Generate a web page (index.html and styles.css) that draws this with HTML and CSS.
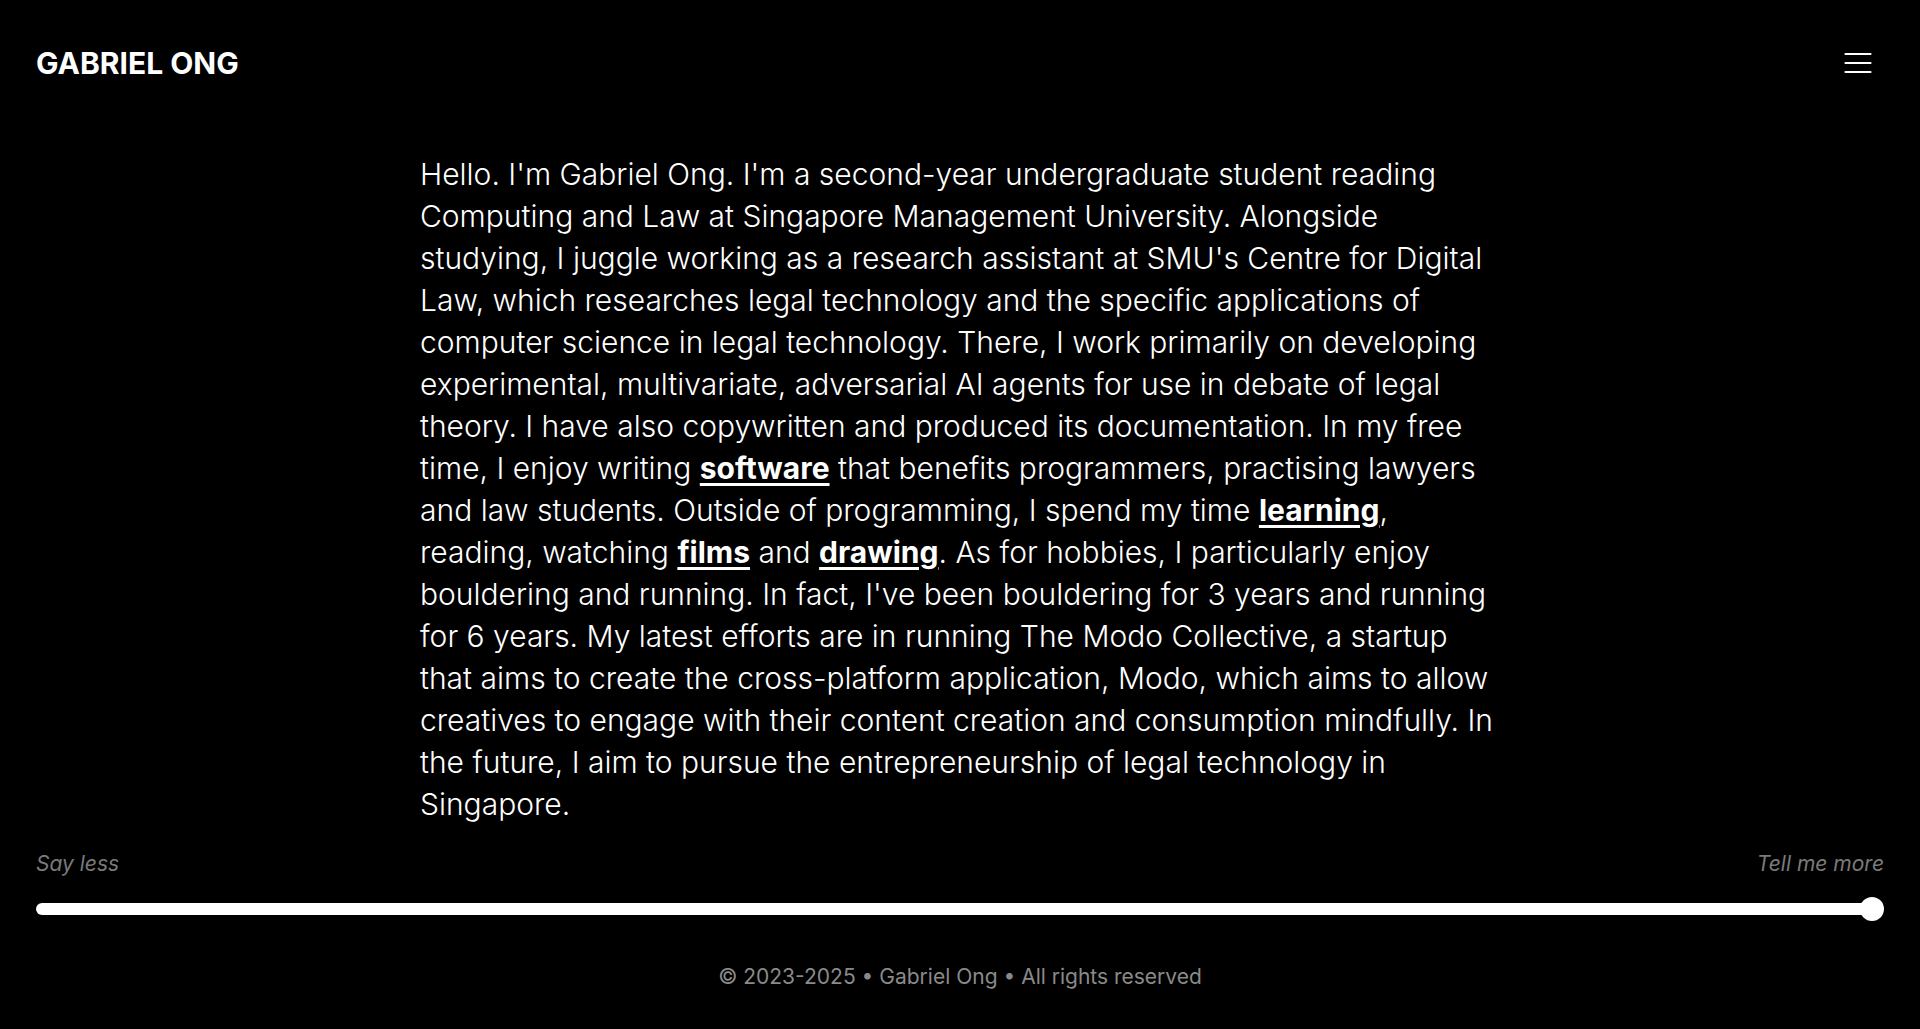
FILE: index.html
```html
<!DOCTYPE html>
<html lang="en">
<head>
<meta charset="utf-8">
<title>Gabriel Ong</title>
<link rel="stylesheet" href="styles.css">
</head>
<body>
<header class="site-header">
  <a class="brand" href="#">GABRIEL ONG</a>
  <button class="menu-btn" aria-label="Menu">
    <svg width="28" height="22" viewBox="0 0 28 22"><g stroke="#fff" stroke-width="2.2" stroke-linecap="round"><line x1="1.5" y1="2" x2="26.5" y2="2"/><line x1="1.5" y1="11" x2="26.5" y2="11"/><line x1="1.5" y1="20" x2="26.5" y2="20"/></g></svg>
  </button>
</header>
<main class="content">
  <p class="bio">Hello. I'm Gabriel Ong. I'm a second-year undergraduate student reading Computing and Law at Singapore Management University. Alongside studying, I juggle working as a research assistant at SMU's Centre for Digital Law, which researches legal technology and the specific applications of computer science in legal technology. There, I work primarily on developing experimental, multivariate, adversarial AI agents for use in debate of legal theory. I have also copywritten and produced its documentation. In my free time, I enjoy writing <a href="#">software</a> that benefits programmers, practising lawyers and law students. Outside of programming, I spend my time <a href="#">learning</a>, reading, watching <a href="#">films</a> and <a href="#">drawing</a>. As for hobbies, I particularly enjoy bouldering and running. In fact, I've been bouldering for 3 years and running for 6 years. My latest efforts are in running The Modo Collective, a startup that aims to create the cross-platform application, Modo, which aims to allow creatives to engage with their content creation and consumption mindfully. In the future, I aim to pursue the entrepreneurship of legal technology in Singapore.</p>
</main>
<section class="slider-area">
  <div class="slider-labels"><span>Say less</span><span>Tell me more</span></div>
  <div class="slider">
    <div class="track"></div>
    <div class="thumb"></div>
  </div>
</section>
<footer class="site-footer">© 2023-2025 • Gabriel Ong • All rights reserved</footer>
</body>
</html>
```
FILE: styles.css
```css
* { box-sizing: border-box; }
html, body { margin: 0; padding: 0; background: #000; color: #fff; }
body { font-family: Inter, "Noto Sans", sans-serif; min-height: 1029px; }
.site-header {
  display: flex;
  justify-content: space-between;
  align-items: center;
  padding: 44px 36px 0 36px;
  height: 82px;
}
.brand {
  font-family: Inter, sans-serif;
  font-weight: 700;
  font-size: 30px;
  color: #fff;
  text-decoration: none;
  line-height: 36px;
}
.menu-btn {
  background: none;
  border: 0;
  padding: 0;
  margin-right: 12px;
  display: flex;
}
.content {
  max-width: 1080px;
  margin: 71px auto 0;
}
.bio {
  margin: 0;
  font-size: 30px;
  line-height: 42px;
  font-weight: 300;
}
.bio a { color: #fff; font-weight: 700; text-decoration: underline; text-underline-offset: 4px; text-decoration-thickness: 3px; }
.slider-area { padding: 27px 36px 0; }
.slider-labels {
  display: flex;
  justify-content: space-between;
  font-style: italic;
  font-size: 21px;
  color: #7a7a7a;
  line-height: 24px;
}
.slider {
  display: flex;
  align-items: center;
  margin-top: 21px;
  height: 24px;
}
.track { flex: 1; height: 12px; background: #fff; border-radius: 6px; }
.thumb { width: 24px; height: 24px; border-radius: 50%; background: #fff; margin-left: -12px; }
.site-footer {
  text-align: center;
  color: #8a8a8a;
  font-size: 21px;
  padding-top: 44px;
  line-height: 24px;
}
```
